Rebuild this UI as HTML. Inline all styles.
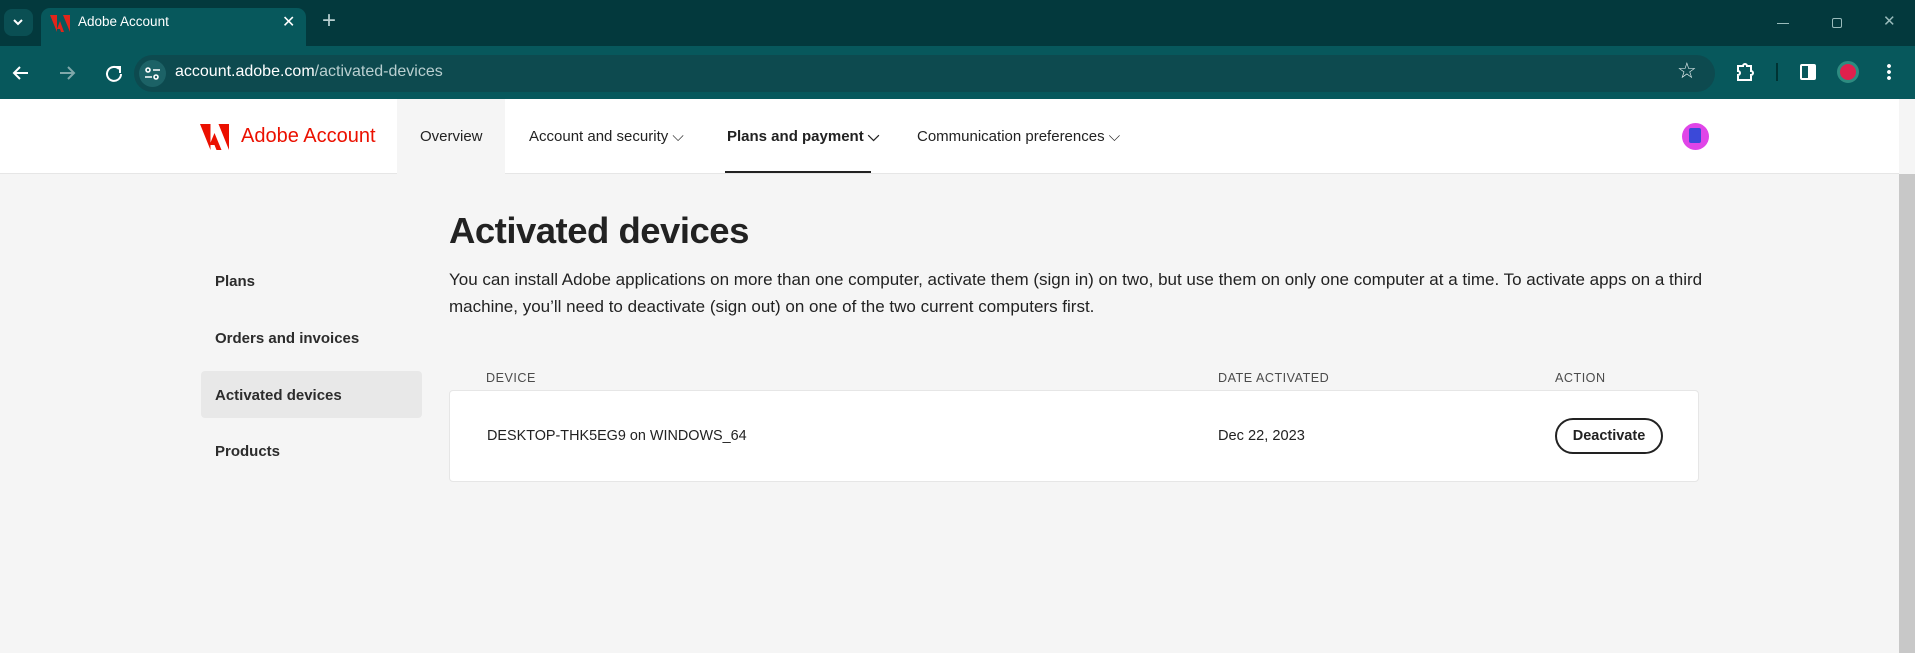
<!DOCTYPE html>
<html><head><meta charset="utf-8"><style>
*{margin:0;padding:0;box-sizing:border-box}
body{width:1915px;height:653px;overflow:hidden;background:#f5f5f5;font-family:"Liberation Sans",sans-serif;position:relative;color:#222}
.abs{position:absolute}
#tabbar{left:0;top:0;width:1915px;height:46px;background:#03393d}
#toolbar{left:0;top:46px;width:1915px;height:53px;background:#07585c}
#tab{left:41px;top:8px;width:265px;height:38px;background:#07585c;border-radius:9px 9px 0 0}
#omni{left:134px;top:55px;width:1581px;height:37px;background:#0d4a4f;border-radius:19px}
#hdr{left:0;top:99px;width:1899px;height:75px;background:#fff;border-bottom:1px solid #e6e6e6}
.nav{top:99px;height:75px;line-height:75px;font-size:15px;color:#222;white-space:nowrap}
.side{left:215px;font-size:15px;font-weight:bold;color:#2c2c2c}
.th{top:371px;font-size:12.6px;color:#4b4b4b;letter-spacing:.5px}
</style></head><body>
<div id="tabbar" class="abs"></div>
<div class="abs" style="left:4px;top:9px;width:29px;height:27px;border-radius:8px;background:#0a4f53"></div>
<svg class="abs" style="left:12px;top:17px" width="12" height="10"><path d="M2 3l4 4 4-4" stroke="#fff" stroke-width="2" fill="none"/></svg>
<div id="tab" class="abs"></div>
<svg class="abs" style="left:50px;top:15px" width="20" height="17"><path d="M0 0h7v17z M13 0h7v17z M10 6l4 11h-3l-1-3h-3z" fill="#e1251b"/></svg>
<div class="abs" style="left:78px;top:14px;color:#fff;font-size:13.5px">Adobe Account</div>
<div class="abs" style="left:282px;top:12px;color:#fff;font-size:16px">✕</div>
<div class="abs" style="left:322px;top:7px;color:#b8cfd0;font-size:24px">+</div>
<div class="abs" style="left:1777px;top:23px;width:12px;height:1px;background:#9bb"></div>
<div class="abs" style="left:1832px;top:18px;width:10px;height:10px;border:1px solid #9bb;border-radius:2px"></div>
<div class="abs" style="left:1883px;top:12px;color:#9bb;font-size:15px">✕</div>
<div id="toolbar" class="abs"></div>
<svg class="abs" style="left:10px;top:63px" width="200" height="20"><g stroke="#fff" stroke-width="2" fill="none"><path d="M18 10H4M10 4l-6 6 6 6"/><path d="M50 10h14M58 4l6 6-6 6" stroke="#7fa8aa"/><path d="M109 6a7 7 0 1 0 2 5M104 4h6v6"/></g></svg>
<div id="omni" class="abs"></div>
<div class="abs" style="left:139px;top:60px;width:27px;height:27px;border-radius:50%;background:#1c6266"></div>
<svg class="abs" style="left:144px;top:66px" width="17" height="15"><g stroke="#fff" stroke-width="1.6" fill="none"><circle cx="4" cy="4" r="2"/><path d="M9 4h7M1 11h7"/><circle cx="12" cy="11" r="2"/></g></svg>
<div class="abs" style="left:175px;top:63px;font-size:16px;color:#fff">account.adobe.com<span style="color:#b9cfd0">/activated-devices</span></div>
<div class="abs" style="left:1677px;top:58px;font-size:22px;color:#e6f0f0">☆</div>
<svg class="abs" style="left:1734px;top:61px" width="22" height="22"><path d="M4 5h5a2 2 0 0 1 4 0h4v5a2 2 0 0 1 0 4v5H4v-5a2 2 0 0 0 0-4z" stroke="#fff" stroke-width="2" fill="none"/></svg>
<div class="abs" style="left:1776px;top:63px;width:2px;height:18px;background:#033"></div>
<div class="abs" style="left:1800px;top:64px;width:16px;height:16px;border:2px solid #fff;border-radius:2px"><div style="position:absolute;right:0;top:0;width:6px;height:12px;background:#fff"></div></div>
<div class="abs" style="left:1837px;top:61px;width:22px;height:22px;border-radius:50%;background:#e0204d;border:3px solid #2d8b80"></div>
<div class="abs" style="left:1887px;top:63px;width:4px;height:18px;background:radial-gradient(circle,#fff 1.8px,transparent 2px) 0 0/4px 6px"></div>
<div id="hdr" class="abs"></div>
<svg class="abs" style="left:200px;top:124px" width="29" height="26"><path d="M0 0h10.5v26z M18.5 0h10.5v26z M14.5 9l7 17h-5l-2-5h-5z" fill="#eb1000"/></svg>
<div class="abs" style="left:241px;top:125px;font-size:20px;color:#eb1000">Adobe Account</div>
<div class="abs" style="left:397px;top:99px;width:108px;height:75px;background:#f5f5f5"></div>
<div class="abs nav" style="left:420px">Overview</div>
<div class="abs nav" style="left:529px">Account and security ⌵</div>
<div class="abs nav" style="left:727px;font-weight:bold">Plans and payment ⌵</div>
<div class="abs" style="left:725px;top:171px;width:146px;height:2px;background:#222"></div>
<div class="abs nav" style="left:917px">Communication preferences ⌵</div>
<div class="abs" style="left:1682px;top:123px;width:27px;height:27px;border-radius:50%;background:#e045e8"><div style="margin:5px 7px;width:12px;height:15px;background:#3b49d9;border-radius:2px"></div></div>
<div class="abs" style="left:1899px;top:174px;width:16px;height:479px;background:#c8c8c8"></div>
<div class="abs" style="left:449px;top:210px;font-size:36.5px;font-weight:bold;color:#222;letter-spacing:-.5px">Activated devices</div>
<div class="abs" style="left:449px;top:266px;width:1270px;font-size:17px;line-height:27px;color:#222">You can install Adobe applications on more than one computer, activate them (sign in) on two, but use them on only one computer at a time. To activate apps on a third machine, you’ll need to deactivate (sign out) on one of the two current computers first.</div>
<div class="abs side" style="top:273px">Plans</div>
<div class="abs side" style="top:330px">Orders and invoices</div>
<div class="abs" style="left:201px;top:371px;width:221px;height:47px;background:#e8e8e8;border-radius:4px"></div>
<div class="abs side" style="top:387px">Activated devices</div>
<div class="abs side" style="top:443px">Products</div>
<div class="abs th" style="left:486px">DEVICE</div>
<div class="abs th" style="left:1218px">DATE ACTIVATED</div>
<div class="abs th" style="left:1555px">ACTION</div>
<div class="abs" style="left:449px;top:390px;width:1250px;height:92px;background:#fff;border:1px solid #e6e6e6;border-radius:4px"></div>
<div class="abs" style="left:487px;top:428px;font-size:14.4px">DESKTOP-THK5EG9 on WINDOWS_64</div>
<div class="abs" style="left:1218px;top:428px;font-size:14.6px">Dec 22, 2023</div>
<div class="abs" style="left:1555px;top:418px;width:108px;height:36px;border:2px solid #222;border-radius:18px;text-align:center;line-height:32px;font-size:14.5px;font-weight:bold">Deactivate</div>
</body></html>
